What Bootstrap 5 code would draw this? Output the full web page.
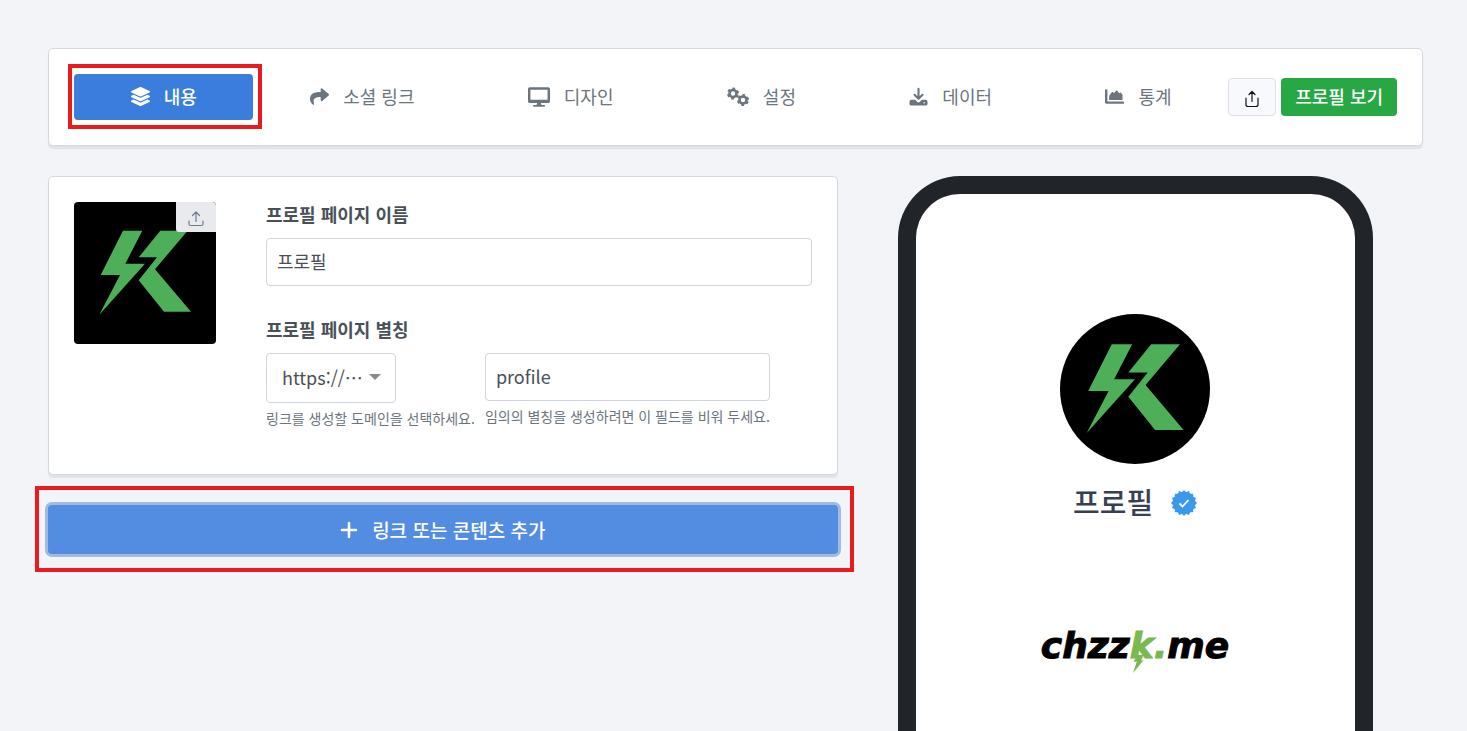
<!DOCTYPE html>
<html lang="ko">
<head>
<meta charset="utf-8">
<meta name="viewport" content="width=device-width, initial-scale=1">
<title>프로필</title>
<link href="https://cdn.jsdelivr.net/npm/bootstrap@5.3.0/dist/css/bootstrap.min.css" rel="stylesheet">
<style>
  body { background: #f3f4f8; color: #495057; font-family: "Noto Sans CJK KR", sans-serif; font-size: 18px; line-height: 27px; }
  .page { padding: 48px 44px 0 48px; }
  .panel { background: #fff; border: 1px solid #d3d8e2; border-radius: 5px; padding: 25px; box-shadow: 0 3px 1px rgba(30, 40, 60, .08); }
  .tabs .nav-link { color: #6c757d; height: 46px; padding: 0 8px 1px; border-radius: 4px; gap: 14px; }
  .tabs .nav-link.active { background: #3a7ddd; color: #fff; font-weight: 500; }
  .tabs svg { width: 19px; height: 19px; flex: none; }
  .tabs svg.wide-icon { width: 22px; height: 20px; }
  .callout-box { position: absolute; border: 4px solid #e81c1e; pointer-events: none; }
  .callout-tab { inset: -10px -9px -9px -6px; }
  .callout-add { inset: -19px -16px -18px -13px; }
  .actions { gap: 5px; }
  .btn-share { width: 48px; height: 38px; padding-top: 4px; background: #f8f9fc; border: 1px solid #dee0e6; color: #111; border-radius: 4px; }
  .btn-view { height: 38px; padding: 0 14px; background: #28a745; color: #fff; font-size: 18px; font-weight: 500; border: 0; border-radius: 4px; line-height: 36px; padding-bottom: 2px; }
  .columns { --bs-gutter-x: 30px; margin-top: 30px; }
  .avatar { width: 142px; height: 142px; background: #000; border-radius: 4px; overflow: hidden; margin-right: 50px; }
  .upload { width: 40px; height: 30px; padding-top: 4px; background: #e9eaee; color: #6c7a8d; border: 0; border-radius: 0 0 0 3px; }
  .form-label { font-weight: 600; margin-bottom: 11px; display: block; line-height: 25px; }
  .form-control, .domain { border: 1px solid #cfd4de; border-radius: 4px; color: #495057; font-size: 18px; }
  .form-control { height: 48px; padding: 0 10px 2px; }
  .domain { appearance: none; width: 130px; height: 50px; padding: 0 30px 2px 15px; background: #fff; }
  .domain-wrap { width: 130px; }
  .domain-arrow { position: absolute; right: 15px; top: 21px; border: 6px solid transparent; border-top-color: #888; border-bottom: 0; pointer-events: none; }
  .alias-row { gap: 10px; margin-bottom: 20px; }
  .hint { font-size: 14px; line-height: 21px; margin-top: 5px; color: #6c757d; white-space: nowrap; }
  .field-gap { margin-bottom: 31px; }
  .add-wrap { margin-top: 30px; }
  .btn-add { height: 49px; padding-bottom: 1px; background: #528de1; color: #fff; border: 0; border-radius: 4px; font-size: 19px; font-weight: 500; box-shadow: 0 0 0 3px #a2bae0; gap: 14px; }
  .phone { width: 100%; max-width: 475px; margin-left: 30px; border: 18px solid #212529; border-bottom: 0; border-radius: 62px 62px 0 0; background: #fff; padding-top: 120px; }
  .round-avatar { width: 150px; height: 150px; background: #000; border-radius: 50%; }
  .profile-name { font-size: 29px; line-height: 40px; color: #364153; margin: 0; font-weight: 500; }
  .name-row { gap: 18px; margin-top: 17px; }
  .wordmark { font: italic bold 36px/44px "DejaVu Sans", sans-serif; color: #000; margin-top: 103px; -webkit-text-stroke: 1px currentColor; }
  .wordmark .leaf { color: #7ab851; }
  .wordmark svg { position: absolute; left: 2px; top: 30px; }
</style>
<script src="https://cdn.jsdelivr.net/npm/bootstrap@5.3.0/dist/js/bootstrap.bundle.min.js"></script>
</head>
<body>
<svg width="0" height="0" class="position-absolute" aria-hidden="true">
  <symbol id="k-logo" viewBox="0 0 142 142"><path fill="#4eaf59" d="M49 28.7H68.3L51.3 61.7H71L25.3 112.7 46 73H26.7ZM86.3 28.7H113.6L81 67.3 117 109.7H90L64.7 78.3 83 55.3H64.7Z"/></symbol>
</svg>
<div class="page container-fluid min-vh-100 d-flex flex-column">
  <header class="panel d-flex align-items-center">
    <ul class="tabs nav nav-fill flex-grow-1 flex-nowrap">
      <li class="nav-item position-relative"><a class="nav-link active d-flex align-items-center justify-content-center" href="#">
        <svg viewBox="0 0 512 512" fill="currentColor"><path d="M12.400 148l232.900 105.700c6.800 3.100 14.500 3.100 21.300 0l232.900-105.700c16.600-7.500 16.600-32.500 0-40L266.700 2.300a25.600 25.600 0 0 0-21.300 0L12.400 108c-16.600 7.500-16.600 32.500 0 40zm487.200 88.300l-58.100-26.300-161.600 73.300c-7.600 3.400-15.600 5.200-23.900 5.200s-16.300-1.700-23.900-5.200L70.500 210l-58.100 26.300c-16.600 7.500-16.600 32.500 0 40l232.900 105.600c6.800 3.100 14.500 3.100 21.300 0l233-105.600c16.500-7.500 16.500-32.500 0-40zm0 127.800l-57.900-26.200-161.800 73.400c-7.600 3.400-15.600 5.200-23.900 5.200s-16.300-1.700-23.900-5.200L70.300 337.900l-57.900 26.200c-16.600 7.500-16.600 32.500 0 40l232.900 105.600c6.800 3.100 14.500 3.100 21.300 0l233-105.600c16.500-7.500 16.500-32.500 0-40z"/></svg>
        <span>내용</span></a><span class="callout-box callout-tab"></span></li>
      <li class="nav-item"><a class="nav-link d-flex align-items-center justify-content-center" href="#">
        <svg viewBox="0 0 512 512" fill="currentColor"><path d="M503.700 189.800L327.700 37.900C312.300 24.500 288 35.300 288 56v80.100C127.400 137.900 0 170.100 0 322.300c0 61.400 39.600 122.300 83.300 154.100 13.700 9.900 33.100-2.500 28.100-18.600C66 312.800 132.900 274.300 288 272.100V360c0 20.700 24.300 31.500 39.700 18.200l176-152c11.100-9.600 11.100-26.800 0-36.400z"/></svg>
        <span>소셜 링크</span></a></li>
      <li class="nav-item"><a class="nav-link d-flex align-items-center justify-content-center" href="#">
        <svg class="wide-icon" viewBox="0 0 576 512" fill="currentColor"><path d="M528 0H48C21.500 0 0 21.500 0 48v320c0 26.500 21.500 48 48 48h192l-16 48h-72c-13.300 0-24 10.700-24 24s10.700 24 24 24h272c13.300 0 24-10.700 24-24s-10.700-24-24-24h-72l-16-48h192c26.500 0 48-21.500 48-48V48c0-26.500-21.500-48-48-48zm-16 328H64V64h448v264z"/></svg>
        <span>디자인</span></a></li>
      <li class="nav-item"><a class="nav-link d-flex align-items-center justify-content-center" href="#">
        <svg class="wide-icon" viewBox="0 0 22 20" fill="none" stroke="currentColor"><g id="gear"><circle cx="6" cy="6.500" r="3.500" stroke-width="2.600"/><circle cx="6" cy="6.500" r="4.900" stroke-width="2.200" stroke-dasharray="2.600 2.531" transform="rotate(17 6 6.500)"/></g><use href="#gear" x="10" y="6.500"/></svg>
        <span>설정</span></a></li>
      <li class="nav-item"><a class="nav-link d-flex align-items-center justify-content-center" href="#">
        <svg viewBox="0 0 20 20" fill="none" stroke="currentColor" stroke-width="2.200" stroke-linecap="round" stroke-linejoin="round"><path d="M10 2v10M5.800 8.200L10 12.300l4.200-4.100"/><path fill="currentColor" stroke="none" d="M2.500 13.500h4l2.300 2.200q1.200 1 2.400 0L13.500 13.500h4q2 0 2 2V17.500q0 2-2 2h-15q-2 0-2-2V15.500q0-2 2-2Z"/><circle cx="16" cy="16.500" r=".8" fill="#fff" stroke="none"/></svg>
        <span>데이터</span></a></li>
      <li class="nav-item"><a class="nav-link d-flex align-items-center justify-content-center" href="#">
        <svg viewBox="0 0 512 512" fill="currentColor"><path d="M500 392c7 0 12 5 12 18v26c0 8-5 12-12 12H32c-18 0-32-14-32-32V76c0-7 5-12 12-12h30c16 0 22 5 22 12v316zM112 352V246c0-8 3-14 8-20l62-85c9-12 24-12 34-2l28 29 54-66c10-12 24-12 34 0l50 64 24-15c11-7 24-4 30 8l32 48c3 6 4 10 4 16v129z"/></svg>
        <span>통계</span></a></li>
    </ul>
    <div class="actions d-flex flex-shrink-0">
      <button class="btn-share d-flex align-items-center justify-content-center" type="button" aria-label="공유"><svg width="16" height="18" viewBox="0 0 16 18" fill="none" stroke="currentColor" stroke-width="1.200" stroke-linecap="round" stroke-linejoin="round"><path d="M8 11.500V1.500M5 4.500l3-3 3 3M2 8v6.500q0 2 2 2h8q2 0 2-2V8"/></svg></button>
      <button class="btn-view" type="button">프로필 보기</button>
    </div>
  </header>
  <main class="columns row flex-grow-1">
    <section class="col-7">
      <form class="panel d-flex align-items-start">
        <div class="avatar position-relative flex-shrink-0"><svg width="142" height="142" role="img" aria-label="K"><use href="#k-logo"/></svg>
          <button class="upload position-absolute top-0 end-0 d-flex align-items-center justify-content-center" type="button" aria-label="업로드"><svg width="16" height="17" viewBox="0 0 16 17" fill="none" stroke="currentColor" stroke-width="1.200" stroke-linecap="round" stroke-linejoin="round"><path d="M8 11.500V2M4.500 5.500L8 2l3.500 3.500M1 11v3q0 1.500 1.500 1.500h11q1.500 0 1.500-1.500v-3"/></svg></button>
        </div>
        <div class="flex-grow-1">
          <div class="field-gap"><label class="form-label" for="name">프로필 페이지 이름</label><input class="form-control" id="name" type="text" value="프로필"></div>
          <label class="form-label" for="alias">프로필 페이지 별칭</label>
          <div class="alias-row d-flex">
            <div>
              <div class="domain-wrap position-relative"><select class="domain d-block" id="domain"><option>https://…</option></select><span class="domain-arrow"></span></div>
              <label class="hint d-block" for="domain">링크를 생성할 도메인을 선택하세요.</label>
            </div>
            <div><input class="form-control" id="alias" type="text" value="profile"><div class="hint">임의의 별칭을 생성하려면 이 필드를 비워 두세요.</div></div>
          </div>
        </div>
      </form>
      <div class="add-wrap position-relative"><button class="btn-add w-100 d-flex align-items-center justify-content-center" type="button"><svg width="18" height="18" viewBox="0 0 18 18" stroke="currentColor" stroke-width="2.600" stroke-linecap="round"><path d="M9 2v14M2 9h14"/></svg><span>링크 또는 콘텐츠 추가</span></button><span class="callout-box callout-add"></span></div>
    </section>
    <aside class="col-5 d-flex">
      <div class="phone d-flex flex-column align-items-center">
        <div class="round-avatar"><svg width="150" height="150" role="img" aria-label="K"><use href="#k-logo"/></svg></div>
        <div class="name-row d-flex align-items-center"><h1 class="profile-name">프로필</h1>
          <svg class="mt-1" width="26" height="26" viewBox="-13 -13 26 26" role="img" aria-label="인증됨"><g fill="#3b99ed"><rect id="sq" x="-9.200" y="-9.200" width="18.400" height="18.400" rx=".6"/><use href="#sq" transform="rotate(22.500)"/><use href="#sq" transform="rotate(45)"/><use href="#sq" transform="rotate(67.500)"/></g><path d="M-4.500 .5l3 3 6-6.500" fill="none" stroke="#fff" stroke-width="1.800"/></svg></div>
        <div class="wordmark">chzz<span class="leaf position-relative">k.<svg width="14" height="18" viewBox="0 0 18 24" aria-hidden="true"><path fill="#7ab851" d="M6 0h9l-3 7h3L1 24 6 9H2Z"/></svg></span>me</div>
      </div>
    </aside>
  </main>
</div>
</body>
</html>
